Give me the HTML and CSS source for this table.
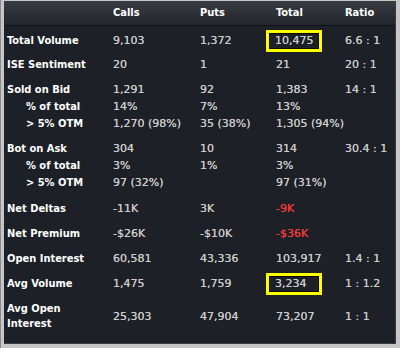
FILE: index.html
```html
<!DOCTYPE html>
<html>
<head>
<meta charset="utf-8">
<link rel="stylesheet" href="styles.css">
</head>
<body>
<div class="frame">
  <div class="panel">
    <div class="row head">
      <span></span><span>Calls</span><span>Puts</span><span>Total</span><span>Ratio</span>
    </div>
    <div class="row main first">
      <span class="lbl">Total Volume</span><span>9,103</span><span>1,372</span><span><span class="hl">10,475</span></span><span>6.6 : 1</span>
    </div>
    <div class="row main ise">
      <span class="lbl">ISE Sentiment</span><span>20</span><span>1</span><span>21</span><span>20 : 1</span>
    </div>
    <div class="row main">
      <span class="lbl">Sold on Bid</span><span>1,291</span><span>92</span><span>1,383</span><span>14 : 1</span>
    </div>
    <div class="row sub">
      <span class="lbl">% of total</span><span>14%</span><span>7%</span><span>13%</span><span></span>
    </div>
    <div class="row sub">
      <span class="lbl">&gt; 5% OTM</span><span>1,270 (98%)</span><span>35 (38%)</span><span>1,305 (94%)</span><span></span>
    </div>
    <div class="row main">
      <span class="lbl">Bot on Ask</span><span>304</span><span>10</span><span>314</span><span>30.4 : 1</span>
    </div>
    <div class="row sub">
      <span class="lbl">% of total</span><span>3%</span><span>1%</span><span>3%</span><span></span>
    </div>
    <div class="row sub">
      <span class="lbl">&gt; 5% OTM</span><span>97 (32%)</span><span></span><span>97 (31%)</span><span></span>
    </div>
    <div class="row main wide">
      <span class="lbl">Net Deltas</span><span>-11K</span><span>3K</span><span class="neg">-9K</span><span></span>
    </div>
    <div class="row main">
      <span class="lbl">Net Premium</span><span>-$26K</span><span>-$10K</span><span class="neg">-$36K</span><span></span>
    </div>
    <div class="row main">
      <span class="lbl">Open Interest</span><span>60,581</span><span>43,336</span><span>103,917</span><span>1.4 : 1</span>
    </div>
    <div class="row main">
      <span class="lbl">Avg Volume</span><span>1,475</span><span>1,759</span><span><span class="hl">3,234</span></span><span>1 : 1.2</span>
    </div>
    <div class="row main wide two">
      <span class="lbl">Avg Open<br>Interest</span><span>25,303</span><span>47,904</span><span>73,207</span><span>1 : 1</span>
    </div>
  </div>
</div>
</body>
</html>
```

FILE: styles.css
```css
html, body {
  margin: 0;
  padding: 0;
}

body {
  width: 400px;
  height: 348px;
  overflow: hidden;
  background: #c6c6c6;
}

.frame {
  width: 400px;
  height: 348px;
  box-sizing: border-box;
  padding: 1px 4px 4px 3px;
  background: #c6c6c6;
  border-left: 1px solid #8a8a8a;
}

.panel {
  height: 343px;
  background: #1d2027;
  box-sizing: border-box;
  border-right: 1px solid #3a3c40;
  border-bottom: 1px solid #3a3c40;
}

.row {
  display: grid;
  grid-template-columns: 106px 87px 76px 69px 1fr;
  padding-left: 3px;
  height: 17px;
  align-items: center;
  font-family: "DejaVu Sans", sans-serif;
  font-size: 11px;
  line-height: 17px;
  color: #cbcbcb;
  text-shadow: 0 0 0.4px #cbcbcb;
  white-space: nowrap;
}

.head {
  height: 24px;
  line-height: 24px;
  background: linear-gradient(#383b41, #23262c);
  border-bottom: 1px solid #0f1115;
  font-family: "DejaVu Sans Condensed", "DejaVu Sans", sans-serif;
  font-weight: bold;
  color: #ffffff;
  text-shadow: none;
}

.lbl {
  font-family: "DejaVu Sans Condensed", "DejaVu Sans", sans-serif;
  font-weight: bold;
  color: #ffffff;
  text-shadow: none;
}

.sub .lbl {
  padding-left: 19px;
}

.main {
  margin-top: 8px;
}

.main.first {
  margin-top: 6px;
}

.main.ise {
  margin-top: 7px;
}

.main.wide {
  margin-top: 9px;
}

.two {
  height: 30px;
}

.two .lbl {
  line-height: 15px;
  white-space: normal;
}

.neg {
  color: #f03a3a;
  text-shadow: 0 0 0.4px #f03a3a;
}

.hl {
  display: inline-block;
  box-sizing: border-box;
  width: 56px;
  height: 22px;
  line-height: 14px;
  margin: -2.5px 0 -2.5px -10px;
  padding: 1px 0 0 6px;
  border: 3px solid #ffff00;
  box-shadow: inset 0 0 0 1px #0a0a0a;
  vertical-align: middle;
}
```
